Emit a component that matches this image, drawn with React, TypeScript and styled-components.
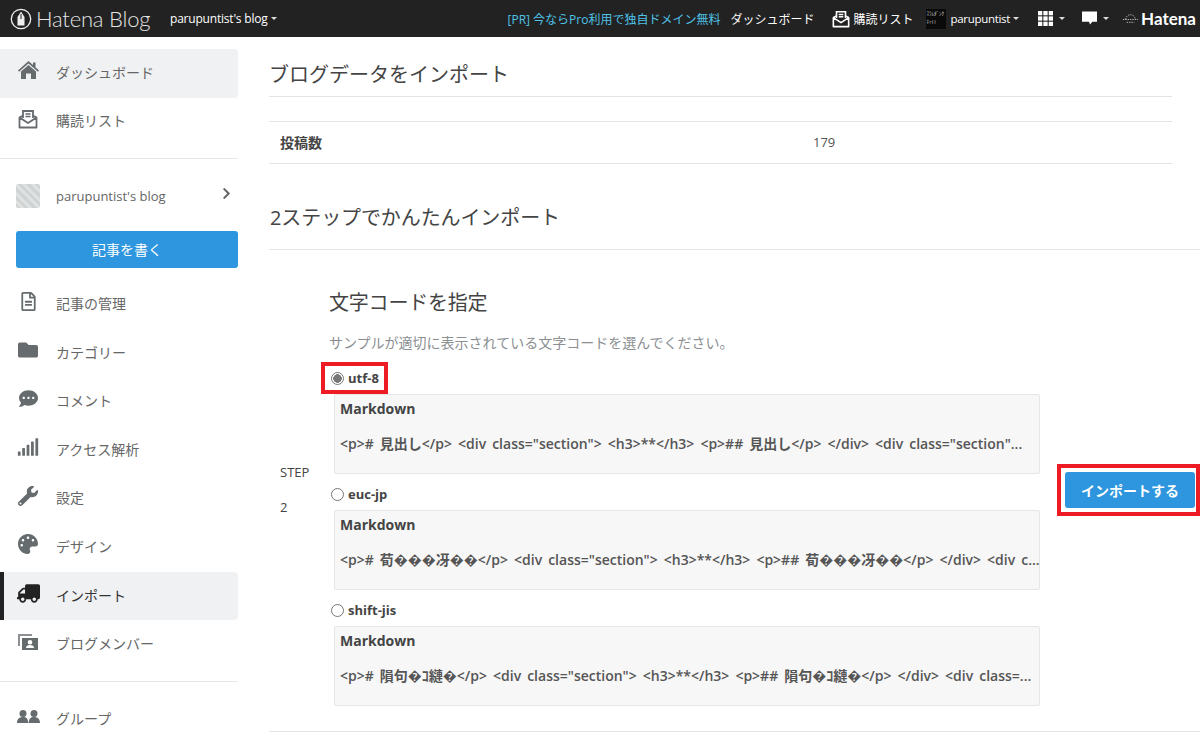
import React from 'react';
import styled, { createGlobalStyle } from 'styled-components';
import {
  FaRegFileAlt,
  FaFolder,
  FaCommentDots,
  FaSignal,
  FaWrench,
  FaPalette,
  FaTruck,
  FaChevronRight,
} from 'react-icons/fa';

const sans = `"Open Sans", "Noto Sans CJK JP", sans-serif`;

const GlobalStyle = createGlobalStyle`
  html, body {
    margin: 0;
    padding: 0;
    background: #fff;
    overflow: hidden;
  }
  body {
    font-family: ${sans};
    color: #444;
  }
`;

const HomeIcon = () => (
  <svg width="21" height="18" viewBox="0 0 21 18" fill="currentColor">
    <path d="M10.500 0 15 4V1.500h2.500v4.700L21 9.500l-1 1.200-9.500-8.300L1 10.700 0 9.500z" />
    <path d="M10.500 4 18 10.500V18h-5v-5.500H8V18H3v-7.500z" />
  </svg>
);

const MailIcon: React.FC<{ size?: number }> = ({ size = 20 }) => (
  <svg width={size} height={size} viewBox="0 0 20 20" fill="none" stroke="currentColor" strokeWidth="1.8">
    <path d="M5 9V2h10v7" />
    <path d="M7.500 5h5M7.500 7.500h5" strokeWidth="1.400" />
    <path d="M1.500 8.500 5 6.500M18.500 8.500 15 6.500M1.500 8.500V18.500h17V8.500L10 14z" strokeLinejoin="round" />
  </svg>
);

const MemberIcon = () => (
  <svg width="20" height="18" viewBox="0 0 20 18" fill="currentColor">
    <path d="M0 1h14v2H2v10H0z" opacity=".75" />
    <path fillRule="evenodd" d="M4 5h16v12H4zm8 2a2.300 2.300 0 1 0 0 4.600A2.300 2.300 0 0 0 12 7zm-4 8h8c0-2-1.600-3-4-3s-4 1-4 3z" />
  </svg>
);

const GroupIcon = () => (
  <svg width="23" height="13" viewBox="0 0 23 13" fill="currentColor">
    <circle cx="6" cy="3.500" r="3.500" />
    <circle cx="17" cy="3.500" r="3.500" />
    <path d="M0 13c0-4 2.500-6 6-6s5 1.500 5.300 6zM11.700 13c.3-4.500 1.800-6 5.300-6s6 2 6 6z" />
  </svg>
);

const LogoMark = () => (
  <svg width="22" height="22" viewBox="0 0 22 22" fill="none" stroke="#eee">
    <circle cx="11" cy="11" r="9.700" strokeWidth="1.300" />
    <path d="M11 3.500 14.500 9v8.500h-7V9z" fill="#eee" stroke="none" />
    <path d="M11 6v5" stroke="#222" strokeWidth="1" />
  </svg>
);

const HatenaMark = () => (
  <svg width="17" height="12" viewBox="0 0 18 12" fill="none" stroke="#bbb" strokeWidth="1" strokeDasharray="1.500 1">
    <path d="M4 6.500a5 5 0 0 1 10 0" />
    <path d="M1 6.500h16M5 9.500h8" />
  </svg>
);

const ChatIcon = () => (
  <svg width="15" height="15" viewBox="0 0 16 15" fill="#fff">
    <path d="M0 0h16v11h-5l-2.500 3-1-3H0z" />
  </svg>
);

const GridIcon = () => (
  <svg width="15" height="15" viewBox="0 0 14 14" fill="#fff">
    {[0, 5, 10].flatMap((y) =>
      [0, 5, 10].map((x) => <rect key={`${x}-${y}`} x={x} y={y} width="4" height="4" />),
    )}
  </svg>
);

const sideItems: { label: string; icon: React.ReactNode }[] = [
  { label: '記事の管理', icon: <FaRegFileAlt size={19} /> },
  { label: 'カテゴリー', icon: <FaFolder size={20} /> },
  { label: 'コメント', icon: <FaCommentDots size={19} /> },
  { label: 'アクセス解析', icon: <FaSignal size={22} /> },
  { label: '設定', icon: <FaWrench size={20} /> },
  { label: 'デザイン', icon: <FaPalette size={20} /> },
];

const encodings = [
  {
    name: 'utf-8',
    checked: true,
    sample:
      '<p># 見出し</p> <div class="section"> <h3>**</h3> <p>## 見出し</p> </div> <div class="section"...',
  },
  {
    name: 'euc-jp',
    checked: false,
    sample:
      '<p># 荀���冴��</p> <div class="section"> <h3>**</h3> <p>## 荀���冴��</p> </div> <div c...',
  },
  {
    name: 'shift-jis',
    checked: false,
    sample:
      '<p># 隕句�ｺ縺�</p> <div class="section"> <h3>**</h3> <p>## 隕句�ｺ縺�</p> </div> <div class=...',
  },
];

const App: React.FC = () => (
  <Page>
    <GlobalStyle />
    <TopBar>
      <Brand>
        <LogoMark />
        <BrandName>Hatena Blog</BrandName>
      </Brand>
      <BlogMenu>
        parupuntist's blog
        <Caret />
      </BlogMenu>
      <TopRight>
        <PromoLink>[PR] 今ならPro利用で独自ドメイン無料</PromoLink>
        <DashLink>ダッシュボード</DashLink>
        <ReaderLink>
          <MailIcon size={18} />
          購読リスト
        </ReaderLink>
        <UserMenu>
          <Avatar>ｽﾗﾑﾀﾞﾝｸ ﾎｯﾄﾄ</Avatar>
          parupuntist
          <Caret />
        </UserMenu>
        <IconMenu $after={17}>
          <GridIcon />
          <Caret />
        </IconMenu>
        <IconMenu $after={13}>
          <ChatIcon />
          <Caret />
        </IconMenu>
        <HatenaLogo>
          <HatenaMark />
          Hatena
        </HatenaLogo>
      </TopRight>
    </TopBar>
    <Body>
      <Sidebar>
        <SideGroup>
          <SideItem $hover>
            <SideIcon>
              <HomeIcon />
            </SideIcon>
            ダッシュボード
          </SideItem>
          <SideItem>
            <SideIcon>
              <MailIcon />
            </SideIcon>
            購読リスト
          </SideItem>
        </SideGroup>
        <SideDivider />
        <BlogRow>
          <BlogThumb />
          <BlogName>parupuntist's blog</BlogName>
          <FaChevronRight size={13} />
        </BlogRow>
        <WriteButton>記事を書く</WriteButton>
        <SideGroup>
          {sideItems.map((item) => (
            <SideItem key={item.label}>
              <SideIcon>{item.icon}</SideIcon>
              {item.label}
            </SideItem>
          ))}
          <SideItem $active>
            <SideIcon>
              <FlippedTruck size={23} />
            </SideIcon>
            インポート
          </SideItem>
          <SideItem>
            <SideIcon>
              <MemberIcon />
            </SideIcon>
            ブログメンバー
          </SideItem>
        </SideGroup>
        <SideDivider />
        <SideItem>
          <SideIcon>
            <GroupIcon />
          </SideIcon>
          グループ
        </SideItem>
      </Sidebar>
      <Main>
        <NarrowBlock>
          <PageTitle>ブログデータをインポート</PageTitle>
          <StatRow>
            <StatLabel>投稿数</StatLabel>
            <StatValue>179</StatValue>
          </StatRow>
        </NarrowBlock>
        <SectionTitle>2ステップでかんたんインポート</SectionTitle>
        <StepRow>
          <StepCell>
            <span>STEP</span>
            <span>2</span>
          </StepCell>
          <FormCell>
            <FormTitle>文字コードを指定</FormTitle>
            <FormHint>サンプルが適切に表示されている文字コードを選んでください。</FormHint>
            {encodings.map((enc) => (
              <div key={enc.name}>
                <RadioLine $marked={enc.checked}>
                  <RadioDot $checked={enc.checked} />
                  {enc.name}
                </RadioLine>
                <SampleBox>
                  <SampleTitle>Markdown</SampleTitle>
                  <SampleText>{enc.sample}</SampleText>
                </SampleBox>
              </div>
            ))}
          </FormCell>
          <ActionCell>
            <ImportFrame>
              <ImportButton>インポートする</ImportButton>
            </ImportFrame>
          </ActionCell>
        </StepRow>
      </Main>
    </Body>
  </Page>
);

const Page = styled.div`
  width: 1200px;
  height: 740px;
  overflow: hidden;
`;

const TopBar = styled.header`
  display: flex;
  align-items: center;
  height: 37px;
  background: #222;
  color: #fff;
  box-sizing: border-box;
  padding-left: 10px;
`;

const Brand = styled.div`
  display: flex;
  align-items: center;
  gap: 4px;
  width: 160px;
`;

const BrandName = styled.span`
  font-family: Lato, sans-serif;
  font-weight: 300;
  font-size: 22px;
  letter-spacing: -0.2px;
  color: #e4e4e4;
  white-space: nowrap;
`;

const BlogMenu = styled.div`
  display: flex;
  align-items: center;
  gap: 3px;
  font-size: 12px;
  letter-spacing: -0.2px;
`;

const Caret = styled.span`
  display: inline-block;
  border-top: 3px solid #ddd;
  border-left: 3px solid transparent;
  border-right: 3px solid transparent;
`;

const TopRight = styled.div`
  display: flex;
  align-items: center;
  margin-left: auto;
  height: 100%;
`;

const PromoLink = styled.a`
  font-size: 12px;
  color: #4fc3e8;
  margin-right: 10px;
  white-space: nowrap;
`;

const DashLink = styled.a`
  font-size: 12px;
  margin-right: 18px;
  white-space: nowrap;
`;

const ReaderLink = styled.a`
  display: flex;
  align-items: center;
  gap: 3px;
  font-size: 12px;
  margin-right: 13px;
  white-space: nowrap;
`;

const UserMenu = styled.div`
  display: flex;
  align-items: center;
  gap: 3px;
  font-size: 11.500px;
  letter-spacing: -0.3px;
  margin-right: 19px;
`;

const Avatar = styled.span`
  display: block;
  width: 20px;
  height: 20px;
  background: #0a0a0a;
  color: #ccc;
  font-size: 5px;
  line-height: 8px;
  overflow: hidden;
  letter-spacing: 0;
  margin-right: 1px;
`;

const IconMenu = styled.div<{ $after: number }>`
  display: flex;
  align-items: center;
  gap: 6px;
  margin-right: ${({ $after }) => $after}px;
`;

const HatenaLogo = styled.div`
  display: flex;
  align-items: center;
  gap: 2px;
  font-family: Lato, sans-serif;
  font-weight: 700;
  font-size: 17px;
  margin-right: 4px;
`;

const Body = styled.div`
  display: flex;
  align-items: flex-start;
`;

const Sidebar = styled.aside`
  flex: 0 0 238px;
  padding-top: 12px;
`;

const SideGroup = styled.div`
  display: flex;
  flex-direction: column;
`;

const SideItem = styled.div<{ $hover?: boolean; $active?: boolean }>`
  display: flex;
  align-items: center;
  height: 48.6px;
  box-sizing: border-box;
  padding-left: ${({ $active }) => ($active ? '12px' : '16px')};
  padding-bottom: 3px;
  border-left: ${({ $active }) => ($active ? '4px solid #222' : 'none')};
  border-radius: 0 4px 4px 0;
  background: ${({ $hover, $active }) => ($hover || $active ? '#f0f1f3' : 'transparent')};
  color: ${({ $active }) => ($active ? '#333' : '#666')};
  font-size: 14px;
`;

const SideIcon = styled.span`
  display: flex;
  align-items: center;
  justify-content: center;
  width: 24px;
  margin-right: 16px;
  color: #666b6e;
  margin-top: -3px;
`;

const FlippedTruck = styled(FaTruck)`
  transform: scaleX(-1);
  color: #222;
`;

const SideDivider = styled.div`
  height: 1px;
  background: #e6e9ea;
  margin: 12px 0 13px;
`;

const BlogRow = styled.div`
  display: flex;
  align-items: center;
  height: 48px;
  padding: 0 5px 0 16px;
  color: #666;
  font-size: 13px;

  svg {
    margin-top: -6px;
  }
`;

const BlogThumb = styled.span`
  flex: none;
  width: 24px;
  height: 24px;
  border-radius: 2px;
  background: repeating-linear-gradient(45deg, #cfd3d3 0 3px, #e0e2e2 3px 6px);
  margin-right: 16px;
`;

const BlogName = styled.span`
  flex: 1;
`;

const WriteButton = styled.button`
  display: block;
  width: 222px;
  height: 37px;
  margin: 11px 0 12px 16px;
  padding: 0 0 2px;
  border: none;
  border-radius: 3px;
  background: #2d96de;
  color: #fff;
  font-family: ${sans};
  font-size: 14px;
`;

const Main = styled.main`
  flex: 1;
  min-width: 0;
  padding-left: 31px;
`;

const NarrowBlock = styled.div`
  width: 903px;
`;

const PageTitle = styled.h1`
  margin: 0;
  height: 60px;
  box-sizing: border-box;
  padding-top: 23px;
  font-size: 20px;
  line-height: 30px;
  font-weight: 400;
  color: #444;
  border-bottom: 1px solid #e2e5e7;
`;

const StatRow = styled.div`
  display: flex;
  align-items: center;
  height: 43px;
  box-sizing: border-box;
  margin-top: 24px;
  padding: 0 0 2px 11px;
  border-top: 1px solid #e2e5e7;
  border-bottom: 1px solid #e2e5e7;
  font-size: 13px;
`;

const StatLabel = styled.strong`
  width: 533px;
  font-size: 14px;
`;

const StatValue = styled.span`
  color: #555;
  font-size: 13px;
`;

const SectionTitle = styled.h2`
  margin: 0;
  height: 86px;
  box-sizing: border-box;
  padding: 39px 0 0 1px;
  font-size: 20px;
  line-height: 30px;
  letter-spacing: -0.1px;
  font-weight: 400;
  color: #444;
  border-bottom: 1px solid #e2e5e7;
`;

const StepRow = styled.div`
  display: flex;
  align-items: center;
  height: 482px;
  box-sizing: border-box;
  border-bottom: 1px solid #e2e5e7;
`;

const StepCell = styled.div`
  display: flex;
  flex-direction: column;
  gap: 16px;
  width: 50px;
  margin: 0 0 2px 11px;
  font-size: 13px;
  line-height: 19px;
  color: #444;
`;

const FormCell = styled.div`
  width: 710px;
  height: 100%;
  box-sizing: border-box;
  padding-top: 37px;
`;

const FormTitle = styled.h3`
  margin: 0 0 0 -1px;
  font-size: 20px;
  line-height: 31px;
  letter-spacing: -0.2px;
  font-weight: 400;
  color: #444;
`;

const FormHint = styled.p`
  margin: 13px 0 0 -1px;
  font-size: 14px;
  line-height: 24px;
  color: #8b8f92;
`;

const RadioLine = styled.label<{ $marked: boolean }>`
  display: flex;
  align-items: center;
  gap: 4px;
  width: fit-content;
  box-sizing: border-box;
  font-size: 13px;
  font-weight: 700;
  color: #444;
  height: ${({ $marked }) => ($marked ? '32px' : '24px')};
  margin: ${({ $marked }) => ($marked ? '7px 0 0 -9px' : '8px 0 4px 1px')};
  padding: ${({ $marked }) => ($marked ? '0 5px 0 6px' : '0')};
  border: ${({ $marked }) => ($marked ? '4px solid #ed1c24' : 'none')};
`;

const RadioDot = styled.span<{ $checked: boolean }>`
  display: block;
  width: 13px;
  height: 13px;
  box-sizing: border-box;
  border-radius: 50%;
  border: 1px solid #777;
  background: ${({ $checked }) =>
    $checked ? 'radial-gradient(circle, #777 0 4px, #fff 4.5px)' : '#fff'};
`;

const SampleBox = styled.div`
  width: 706px;
  height: 80px;
  box-sizing: border-box;
  margin-left: 4px;
  padding: 5px 0 5px 5px;
  background: #f7f7f7;
  border: 1px solid #e6e6e6;
  border-radius: 2px;
`;

const SampleTitle = styled.div`
  font-size: 14px;
  line-height: 18px;
  font-weight: 700;
  color: #444;
`;

const SampleText = styled.div`
  margin-top: 17px;
  font-size: 14px;
  line-height: 18px;
  font-weight: 600;
  word-spacing: 2.4px;
  color: #555;
  white-space: nowrap;
`;

const ActionCell = styled.div`
  flex: 1;
  display: flex;
  justify-content: flex-end;
`;

const ImportFrame = styled.div`
  padding: 4px 1px 4px 4px;
  border: 4px solid #ed1c24;
  margin-bottom: 1px;
`;

const ImportButton = styled.button`
  display: block;
  width: 130px;
  height: 36px;
  border: none;
  border-radius: 3px;
  background: #2d96de;
  color: #fff;
  font-family: ${sans};
  font-size: 14px;
  font-weight: 700;
`;

export default App;
